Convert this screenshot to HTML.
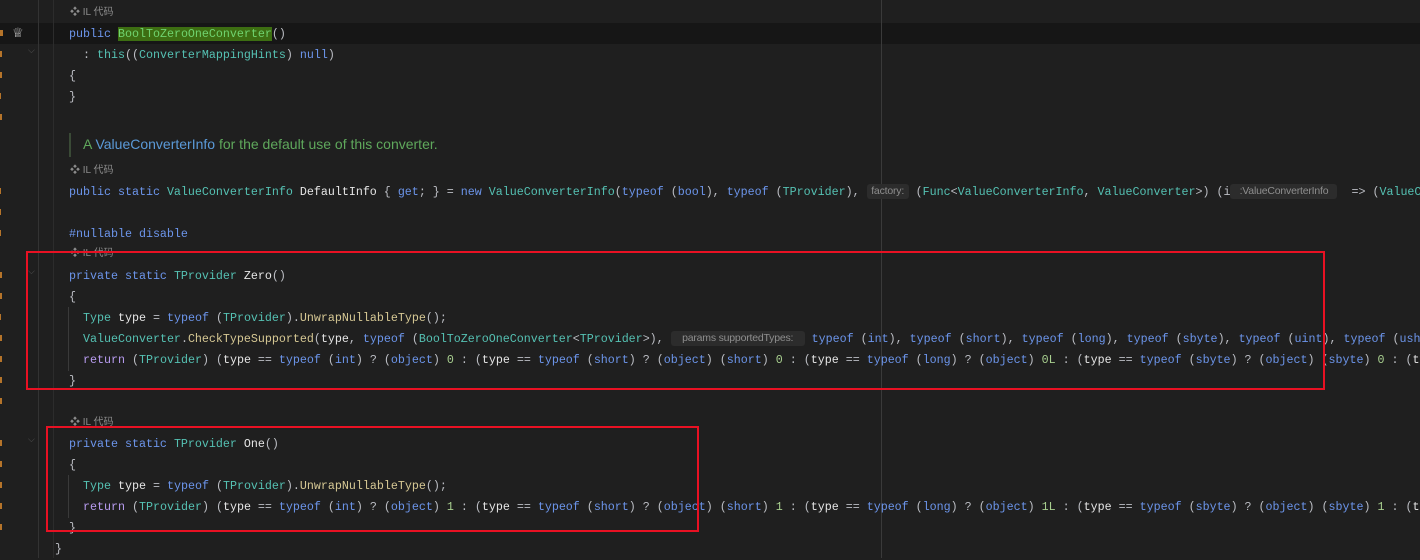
<!DOCTYPE html>
<html><head><meta charset="utf-8"><style>
body{margin:0;width:1420px;height:558px;background:#1f1f1f;overflow:hidden;position:relative;font-family:"Liberation Mono",monospace;}
.l{position:absolute;left:69px;height:21px;line-height:21px;font-size:11.67px;color:#bcbec4;white-space:pre;margin-top:1px}
.k{color:#6c95eb}.t{color:#55c1b3}.m{color:#d6c894}.v{color:#e6e6e6}.r{color:#b89cf0}.n{color:#a8cf8f}
.il{position:absolute;left:70px;font-family:"Liberation Sans","Noto Sans CJK SC",sans-serif;font-size:10px;color:#8b8b8b;line-height:12px;}
.h{display:inline-block;font-family:"Liberation Sans",sans-serif;font-size:10.5px;color:#8e8e8e;background:#2c2c2c;border-radius:3px;line-height:15px;height:15px;vertical-align:1px;text-align:center;letter-spacing:-0.2px}
.box{position:absolute;border:2px solid #e81123;}
.vl{position:absolute;top:0;width:1px;height:558px;}
.or{position:absolute;left:0;width:3px;height:6px;background:#b5742a;}
</style></head><body>
<div style="position:absolute;left:0;top:23px;width:1420px;height:21px;background:#161616"></div>
<div class="vl" style="left:38px;background:#333"></div>
<div class="vl" style="left:53px;background:#2c2c2c"></div>
<div class="vl" style="left:881px;background:#3a3a3a"></div>
<div class="vl" style="left:68px;top:307px;height:64px;background:#3a3a3a"></div>
<div class="vl" style="left:68px;top:475px;height:43px;background:#3a3a3a"></div>
<div class="or" style="top:30px"></div><div class="or" style="top:51px;width:2px"></div><div class="or" style="top:72px;width:2px"></div><div class="or" style="top:93px;width:1px"></div><div class="or" style="top:114px;width:2px"></div>
<div class="or" style="top:188px;width:1px"></div><div class="or" style="top:209px;width:1px"></div><div class="or" style="top:230px;width:1px"></div><div class="or" style="top:272px;width:2px"></div><div class="or" style="top:293px;width:2px"></div><div class="or" style="top:314px;width:1px"></div><div class="or" style="top:335px;width:2px"></div><div class="or" style="top:356px;width:2px"></div><div class="or" style="top:377px;width:2px"></div><div class="or" style="top:398px;width:2px"></div><div class="or" style="top:440px;width:2px"></div><div class="or" style="top:461px;width:2px"></div><div class="or" style="top:482px;width:2px"></div><div class="or" style="top:503px;width:2px"></div><div class="or" style="top:524px;width:2px"></div>
<div style="position:absolute;left:12px;top:26px;color:#ccc;font-size:13px">♕</div>
<div style="position:absolute;left:28px;top:46px;color:#555;font-size:9px">⌵</div>
<div style="position:absolute;left:28px;top:267px;color:#555;font-size:9px">⌵</div>
<div style="position:absolute;left:28px;top:435px;color:#555;font-size:9px">⌵</div>

<div class="il" style="top:7px">❖ IL 代码</div>
<div class="l" style="top:23px"><span class="k">public</span> <span style="background:#3d6e12;color:#6fd36f">BoolToZeroOneConverter</span>()</div>
<div class="l" style="top:44px">  : <span class="t">this</span>((<span class="t">ConverterMappingHints</span>) <span class="k">null</span>)</div>
<div class="l" style="top:65px">{</div>
<div class="l" style="top:86px">}</div>
<div style="position:absolute;left:69px;top:133px;width:2px;height:24px;background:#3a4a36"></div>
<div style="position:absolute;left:83px;top:136px;font-family:'Liberation Sans',sans-serif;font-size:14px;color:#5fa85c">A <span style="color:#5b9ad8">ValueConverterInfo</span> for the default use of this converter.</div>
<div class="il" style="top:165px">❖ IL 代码</div>
<div class="l" style="top:181px"><span class="k">public static</span> <span class="t">ValueConverterInfo</span> <span class="v">DefaultInfo</span> { <span class="k">get</span>; } = <span class="k">new</span> <span class="t">ValueConverterInfo</span>(<span class="k">typeof</span> (<span class="k">bool</span>), <span class="k">typeof</span> (<span class="t">TProvider</span>), <span class="h" style="width:42px">factory:</span> (<span class="t">Func</span>&lt;<span class="t">ValueConverterInfo</span>, <span class="t">ValueConverter</span>&gt;) (i<span class="h" style="width:107px">:ValueConverterInfo</span>  =&gt; (<span class="t">ValueConverter</span></div>
<div class="l" style="top:223px"><span class="k">#nullable disable</span></div>
<div class="il" style="top:248px">❖ IL 代码</div>
<div class="l" style="top:265px"><span class="k">private static</span> <span class="t">TProvider</span> <span class="v">Zero</span>()</div>
<div class="l" style="top:286px">{</div>
<div class="l" style="top:307px">  <span class="t">Type</span> <span class="v">type</span> = <span class="k">typeof</span> (<span class="t">TProvider</span>).<span class="m">UnwrapNullableType</span>();</div>
<div class="l" style="top:328px">  <span class="t">ValueConverter</span>.<span class="m">CheckTypeSupported</span>(<span class="v">type</span>, <span class="k">typeof</span> (<span class="t">BoolToZeroOneConverter</span>&lt;<span class="t">TProvider</span>&gt;), <span class="h" style="width:134px">params supportedTypes:</span> <span class="k">typeof</span> (<span class="k">int</span>), <span class="k">typeof</span> (<span class="k">short</span>), <span class="k">typeof</span> (<span class="k">long</span>), <span class="k">typeof</span> (<span class="k">sbyte</span>), <span class="k">typeof</span> (<span class="k">uint</span>), <span class="k">typeof</span> (<span class="k">ushort</span></div>
<div class="l" style="top:349px">  <span class="r">return</span> (<span class="t">TProvider</span>) (<span class="v">type</span> == <span class="k">typeof</span> (<span class="k">int</span>) ? (<span class="k">object</span>) <span class="n">0</span> : (<span class="v">type</span> == <span class="k">typeof</span> (<span class="k">short</span>) ? (<span class="k">object</span>) (<span class="k">short</span>) <span class="n">0</span> : (<span class="v">type</span> == <span class="k">typeof</span> (<span class="k">long</span>) ? (<span class="k">object</span>) <span class="n">0L</span> : (<span class="v">type</span> == <span class="k">typeof</span> (<span class="k">sbyte</span>) ? (<span class="k">object</span>) (<span class="k">sbyte</span>) <span class="n">0</span> : (<span class="v">type</span></div>
<div class="l" style="top:370px">}</div>
<div class="il" style="top:417px">❖ IL 代码</div>
<div class="l" style="top:433px"><span class="k">private static</span> <span class="t">TProvider</span> <span class="v">One</span>()</div>
<div class="l" style="top:454px">{</div>
<div class="l" style="top:475px">  <span class="t">Type</span> <span class="v">type</span> = <span class="k">typeof</span> (<span class="t">TProvider</span>).<span class="m">UnwrapNullableType</span>();</div>
<div class="l" style="top:496px">  <span class="r">return</span> (<span class="t">TProvider</span>) (<span class="v">type</span> == <span class="k">typeof</span> (<span class="k">int</span>) ? (<span class="k">object</span>) <span class="n">1</span> : (<span class="v">type</span> == <span class="k">typeof</span> (<span class="k">short</span>) ? (<span class="k">object</span>) (<span class="k">short</span>) <span class="n">1</span> : (<span class="v">type</span> == <span class="k">typeof</span> (<span class="k">long</span>) ? (<span class="k">object</span>) <span class="n">1L</span> : (<span class="v">type</span> == <span class="k">typeof</span> (<span class="k">sbyte</span>) ? (<span class="k">object</span>) (<span class="k">sbyte</span>) <span class="n">1</span> : (<span class="v">type</span></div>
<div class="l" style="top:517px">}</div>
<div class="l" style="top:538px;left:55px">}</div>

<div class="box" style="left:26px;top:251px;width:1295px;height:135px"></div>
<div class="box" style="left:46px;top:426px;width:649px;height:102px"></div>
</body></html>
